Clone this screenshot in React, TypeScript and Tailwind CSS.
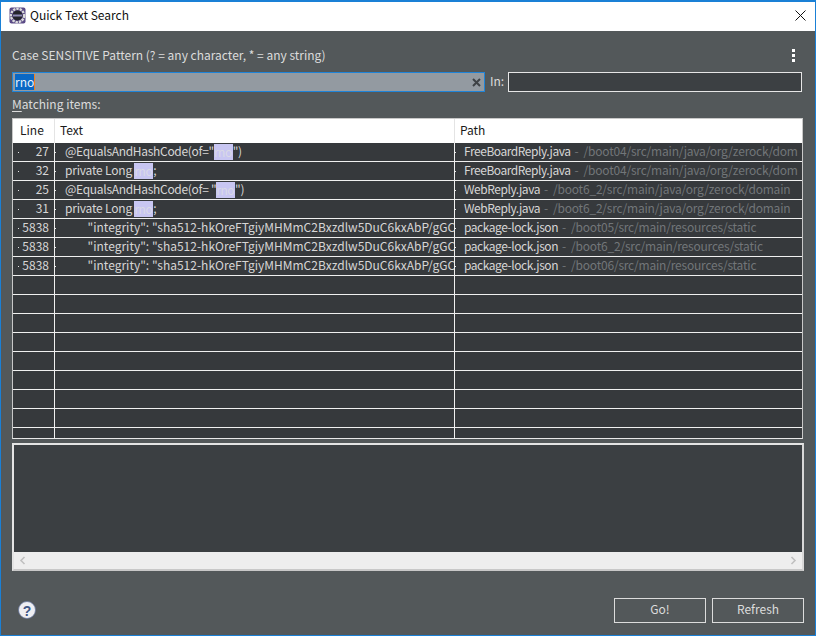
const font = { fontFamily: '"Noto Sans CJK KR", "Noto Sans", sans-serif' };

interface ResultRow {
  line: string;
  text: React.ReactNode;
  file: string;
  path: string;
}

function Hit() {
  return <span className="bg-[#c8c6f2] text-[#d9d9e6] inline-block h-[16px] leading-[16px] align-top mt-[1px] tracking-[-0.5px] pr-[1px]">rno</span>;
}

const integrity = <span className="ml-[1px]">{'        "integrity": "sha512-hkOreFTgiyMHMmC2Bxzdlw5DuC6kxAbP/gGC'}</span>;

const rows: ResultRow[] = [
  { line: '27', text: <span className="tracking-[-0.3px]">@EqualsAndHashCode(of="<Hit />")</span>, file: 'FreeBoardReply.java', path: '/boot04/src/main/java/org/zerock/dom' },
  { line: '32', text: <span className="tracking-[-0.2px]">private Long <Hit />;</span>, file: 'FreeBoardReply.java', path: '/boot04/src/main/java/org/zerock/dom' },
  { line: '25', text: <span className="tracking-[-0.3px]">@EqualsAndHashCode(of= "<Hit />")</span>, file: 'WebReply.java', path: '/boot6_2/src/main/java/org/zerock/domain' },
  { line: '31', text: <span className="tracking-[-0.2px]">private Long <Hit />;</span>, file: 'WebReply.java', path: '/boot6_2/src/main/java/org/zerock/domain' },
  { line: '5838', text: integrity, file: 'package-lock.json', path: '/boot05/src/main/resources/static' },
  { line: '5838', text: integrity, file: 'package-lock.json', path: '/boot6_2/src/main/resources/static' },
  { line: '5838', text: integrity, file: 'package-lock.json', path: '/boot06/src/main/resources/static' },
];

function AppIcon() {
  return (
    <svg width="17" height="17" viewBox="0 0 17 17">
      <rect x="0.5" y="0.5" width="16" height="16" rx="2" fill="#5a4a86" />
      <circle cx="8.5" cy="8.5" r="6.6" fill="none" stroke="#dcdcdc" strokeWidth="2.4" strokeDasharray="2.4 0.9" />
      <circle cx="8.5" cy="8.5" r="5" fill="#24242c" />
      <path d="M4 8.5h9" stroke="#8f8bb8" strokeWidth="2" />
    </svg>
  );
}

function Tick() {
  return <span className="w-px h-px bg-[#e8e8e8] shrink-0" />;
}

export default function App() {
  return (
    <div style={font} className="w-[816px] h-[636px] flex flex-col border border-[#1a80d6] border-t-2 bg-[#53585a] text-[12px] overflow-hidden">
      {/* Title bar */}
      <div className="h-[29px] bg-white flex items-center shrink-0 pl-[8px] pr-[9px] pb-[3px]">
        <AppIcon />
        <span className="ml-[4px] text-[#111]">Quick Text Search</span>
        <svg className="ml-auto" width="11" height="11" viewBox="0 0 11 11">
          <path d="M0.5 0.5l10 10M10.5 0.5l-10 10" stroke="#111" strokeWidth="1" />
        </svg>
      </div>

      <div className="flex-1 flex flex-col pl-[11px] pr-[11px] min-h-0">
        {/* Pattern label */}
        <div className="flex items-center justify-between h-[17px] mt-[16px] text-[#dcdcdc]">
          <span className="mb-[2px]">Case SENSITIVE Pattern (? = any character, * = any string)</span>
          <span className="flex flex-col gap-[2px] mr-[9px]">
            <span className="w-[3px] h-[3px] bg-white" />
            <span className="w-[3px] h-[3px] bg-white" />
            <span className="w-[3px] h-[3px] bg-white" />
          </span>
        </div>

        {/* Inputs */}
        <div className="flex items-center mt-[8px] h-[20px]">
          <div className="w-[473px] h-[20px] border border-[#1f84d8] bg-[#939aa1] flex items-center pl-[2px] pr-[2px]">
            <span className="bg-[#0a68c4] text-[#e8f0f8] h-[16px] leading-[15px]">rno</span>
            <span className="w-px h-[16px] bg-[#f08020]" />
            <svg className="ml-auto mr-[1px]" width="9" height="9" viewBox="0 0 9 9">
              <path d="M1 1l7 7M8 1L1 8" stroke="#3e4246" strokeWidth="2" />
            </svg>
          </div>
          <span className="ml-[5px] text-[#dcdcdc] w-[18px] mb-[2px]">In:</span>
          <div className="w-[294px] h-[20px] border border-[#e6e6e6] bg-[#3c4043]" />
        </div>

        <div className="mt-[4px] h-[18px] leading-[16px] text-[#dcdcdc]"><span className="underline underline-offset-2">M</span>atching items:</div>

        {/* Results table */}
        <div className="mt-[4px] h-[321px] w-[791px] border border-[#c8c8c8] border-b-[#e8e8e8] shrink-0 overflow-hidden bg-[#36393c] flex flex-col">
          <div className="h-[24px] bg-white flex items-center text-[#1a1a1a] shrink-0">
            <div className="w-[42px] h-full flex items-center pl-[7px] pb-[2px] border-r border-[#e4e4e4]">Line</div>
            <div className="w-[400px] h-full flex items-center pl-[5px] pb-[2px] border-r border-[#e4e4e4]">Text</div>
            <div className="flex-1 pl-[5px] pb-[2px]">Path</div>
          </div>
          {Array.from({ length: 16 }).map((_, i) => {
            const row = rows[i];
            return (
              <div key={i} className="h-[19px] flex shrink-0 border-b border-[#f0f0f0] text-[#d6d6d6] leading-[16px]">
                <div className="w-[42px] border-r border-[#f0f0f0] flex items-center pl-[5px] pr-[5px]">
                  {row && <Tick />}
                  {row && <span className="ml-auto mb-[2px]">{row.line}</span>}
                </div>
                <div className="w-[400px] border-r border-[#f0f0f0] flex items-center overflow-hidden">
                  {row && <Tick />}
                  <span className="ml-[9px] mb-[2px] whitespace-pre">{row?.text}</span>
                </div>
                <div className="flex-1 flex items-center overflow-hidden">
                  {row && <Tick />}
                  {row && (
                    <span className="ml-[8px] mb-[2px] whitespace-pre">
                      <span className="tracking-[-0.45px]">{row.file}</span>
                      <span className="text-[#727679] tracking-[-0.2px] ml-[4px]">-  {row.path}</span>
                    </span>
                  )}
                </div>
              </div>
            );
          })}
        </div>

        {/* Preview */}
        <div className="mt-[4px] h-[128px] w-[792px] border-2 border-[#e4e4e4] border-b-[#c8c8c8] border-r-[#d8d8d8] flex flex-col shrink-0 bg-[#3b3f42]">
          <div className="flex-1" />
          <div className="h-[17px] bg-[#eeeeee] flex items-center justify-between px-[5px]">
            <svg width="7" height="9" viewBox="0 0 7 9"><path d="M5.5 1L2 4.5 5.5 8" fill="none" stroke="#c0c0c0" strokeWidth="1.6" /></svg>
            <svg width="7" height="9" viewBox="0 0 7 9"><path d="M1.5 1L5 4.5 1.5 8" fill="none" stroke="#c0c0c0" strokeWidth="1.6" /></svg>
          </div>
        </div>

        {/* Footer */}
        <div className="flex items-center mt-[26px] h-[26px]">
          <svg className="ml-[6px]" width="18" height="18" viewBox="0 0 18 18">
            <circle cx="9" cy="9" r="8.5" fill="#eeeef2" stroke="#64749a" strokeWidth="0.8" />
            <text x="9" y="14.5" textAnchor="middle" fontSize="14" fontWeight="700" fill="#3f5585" fontFamily="Liberation Sans">?</text>
          </svg>
          <button className="ml-auto w-[92px] h-[25px] border border-[#dcdcdc] text-[#dcdcdc] pb-[2px]">Go!</button>
          <button className="ml-[6px] w-[92px] h-[25px] border border-[#dcdcdc] text-[#dcdcdc] pb-[2px]">Refresh</button>
        </div>
      </div>
    </div>
  );
}
